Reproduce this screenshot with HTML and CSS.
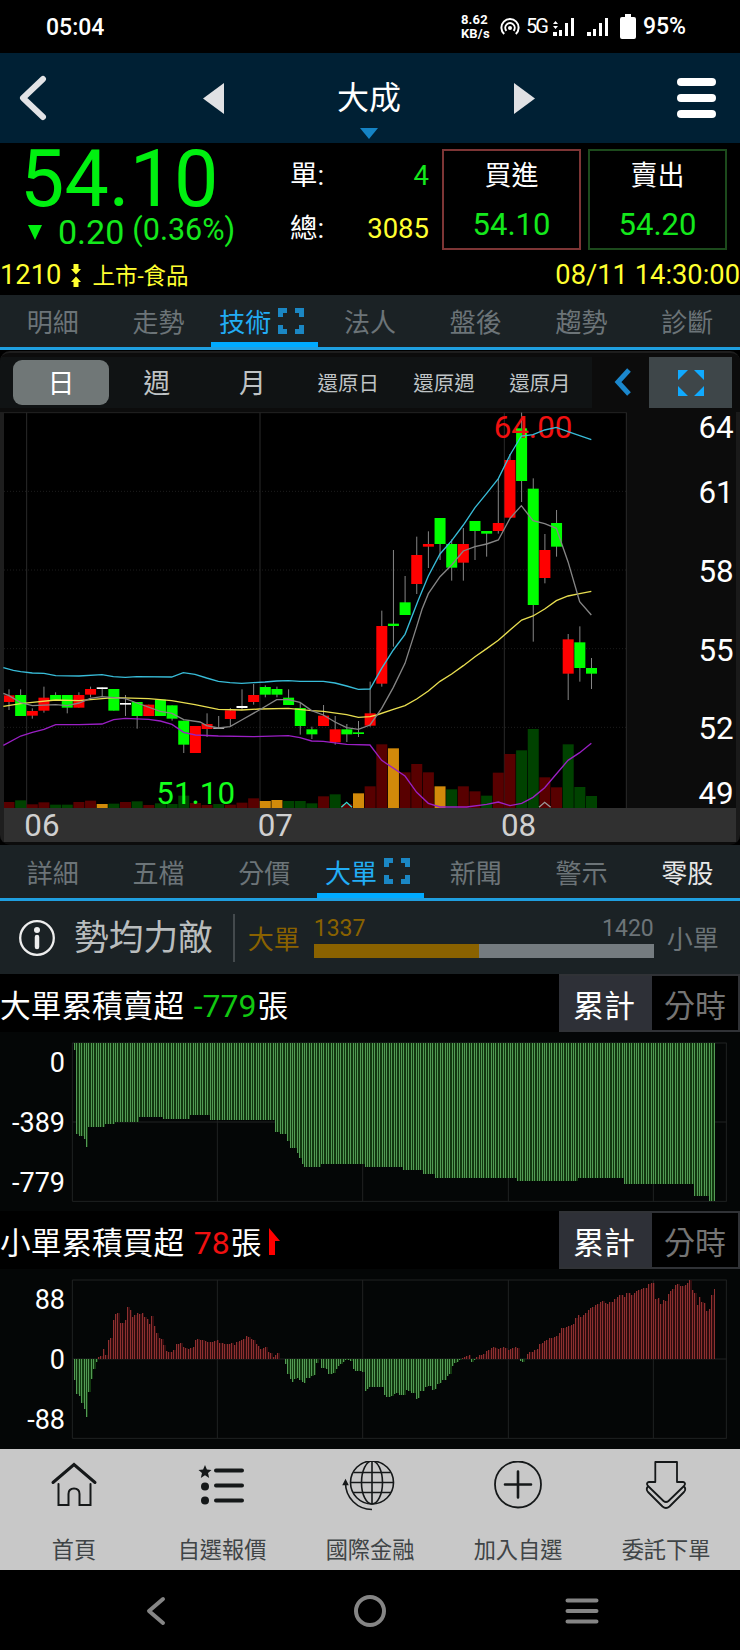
FILE: index.html
```html
<!DOCTYPE html>
<html lang="zh-Hant">
<head>
    <meta charset="UTF-8">
    <meta name="viewport" content="width=device-width, initial-scale=1.0">
    <title>大成 1210</title>
    <link rel="stylesheet" href="styles.css">
</head>
<body>
    <div class="status-bar">
        <span class="clock">05:04</span>
        <div class="status-right">
            <span class="speed">8.62<br>KB/s</span>
            <svg class="hotspot" width="20" height="18" viewBox="0 0 20 18" fill="none" stroke="#fff" stroke-width="2">
                <path d="M4.2 16A8.6 8.6 0 1 1 15.8 16M6.4 12.8A4.7 4.7 0 1 1 13.6 12.8"/>
                <circle cx="10" cy="10" r="2" fill="#fff" stroke="none"/>
            </svg>
            <span class="net">5G</span>
            <svg class="signal" width="22" height="20" viewBox="0 0 22 20" fill="#fff">
                <path d="M0 7L2.5 4L5 7ZM0 9L2.5 12L5 9ZM0 15h4v4H0ZM6 13h3v6H6ZM12 6h3v13h-3ZM18 1h3v18h-3Z"/>
            </svg>
            <svg class="signal2" width="22" height="20" viewBox="0 0 22 20" fill="#fff">
                <path d="M0 15h4v4H0ZM6 12h3v7H6ZM12 6h3v13h-3ZM18 1h3v18h-3Z"/>
            </svg>
            <svg class="battery" width="16" height="25" viewBox="0 0 16 25" fill="#fff">
                <path d="M5 0h6v3h3q2 0 2 2v18q0 2-2 2H2q-2 0-2-2V5q0-2 2-2h3Z"/>
            </svg>
            <span class="percent">95%</span>
        </div>
    </div>

    <header class="header">
        <svg class="back" width="30" height="46" viewBox="0 0 30 46" fill="none" stroke="#e2e3e6" stroke-width="6" stroke-linecap="round" stroke-linejoin="round">
            <path d="M25 4L5 23L25 42"/>
        </svg>
        <div class="stock-switch">
            <svg width="21" height="31" viewBox="0 0 21 31" fill="#e0e1e4"><path d="M21 0V31L0 15.500Z"/></svg>
            <div class="stock-name">大成
                <svg class="drop" width="18" height="11" viewBox="0 0 18 11" fill="#1583c4"><path d="M0 0H18L9 11Z"/></svg>
            </div>
            <svg width="21" height="31" viewBox="0 0 21 31" fill="#e0e1e4"><path d="M0 0V31L21 15.500Z"/></svg>
        </div>
        <div class="menu"><i></i><i></i><i></i></div>
    </header>

    <section class="quote">
        <div class="price-box">
            <div class="price">54.10</div>
            <div class="change">
                <svg width="14" height="15" viewBox="0 0 14 15" fill="#00f010"><path d="M0 0H14L7 15Z"/></svg>
                <span class="diff">0.20</span>
                <span class="rate">(0.36%)</span>
            </div>
        </div>
        <div class="volume-box">
            <div><span>單:</span><span class="green">4</span></div>
            <div><span>總:</span><span class="yellow">3085</span></div>
        </div>
        <div class="order buy"><span>買進</span><b>54.10</b></div>
        <div class="order sell"><span>賣出</span><b>54.20</b></div>
    </section>

    <div class="info-row">
        <span>1210</span>
        <svg width="10" height="23" viewBox="0 0 10 23" fill="#ffff30">
            <path d="M2.500 0h5v5H10L5 10.500L0 5h2.500ZM2.500 23h5v-5H10L5 12.500L0 18h2.500Z"/>
        </svg>
        <span class="market">上市-食品</span>
        <span class="time">08/11 14:30:00</span>
    </div>

    <nav class="tabs">
        <span>明細</span>
        <span>走勢</span>
        <span class="active">技術
            <svg width="26" height="26" viewBox="0 0 26 26" fill="none" stroke="#1b87c4" stroke-width="5"><path d="M2.500 9V2.500H9M17 2.500H23.500V9M23.500 17V23.500H17M9 23.500H2.500V17"/></svg>
        </span>
        <span>法人</span>
        <span>盤後</span>
        <span>趨勢</span>
        <span>診斷</span>
    </nav>

    <section class="k-card">
        <div class="toolbar">
            <div class="periods">
                <span class="selected">日</span>
                <span>週</span>
                <span>月</span>
                <span class="small">還原日</span>
                <span class="small">還原週</span>
                <span class="small">還原月</span>
            </div>
            <svg class="fold" width="17" height="28" viewBox="0 0 17 28" fill="none" stroke="#1b87cc" stroke-width="5"><path d="M15 2L4 14L15 26"/></svg>
            <div class="expand">
                <svg width="26" height="26" viewBox="0 0 26 26" fill="#10aaff"><path d="M0 0H10L0 10ZM26 0V10L16 0ZM26 26H16L26 16ZM0 26V16L10 26Z"/></svg>
            </div>
        </div>
        <svg id="k-chart" width="740" height="430" viewBox="0 -564 2220 1290"></svg>
    </section>

    <nav class="tabs tabs-lower">
        <span>詳細</span>
        <span>五檔</span>
        <span>分價</span>
        <span class="active">大單
            <svg width="26" height="26" viewBox="0 0 26 26" fill="none" stroke="#1b87c4" stroke-width="5"><path d="M2.500 9V2.500H9M17 2.500H23.500V9M23.500 17V23.500H17M9 23.500H2.500V17"/></svg>
        </span>
        <span>新聞</span>
        <span>警示</span>
        <span class="light">零股</span>
    </nav>

    <section class="power">
        <svg width="36" height="36" viewBox="0 0 36 36" fill="none" stroke="#eee">
            <circle cx="18" cy="18" r="16.800" stroke-width="2.300"/>
            <circle cx="18" cy="10" r="3" fill="#eee" stroke="none"/>
            <path d="M18 17V27" stroke-width="4.500" stroke-linecap="round"/>
        </svg>
        <span class="power-text">勢均力敵</span>
        <span class="big">大單</span>
        <div class="ratio">
            <div class="ratio-nums"><span>1337</span><span>1420</span></div>
            <div class="ratio-bar"><i style="width: 48.5%"></i></div>
        </div>
        <span class="little">小單</span>
    </section>

    <section class="flow">
        <div class="flow-head">
            <h2>大單累積賣超 <em class="down">-779</em>張</h2>
            <div class="toggle"><span class="on">累計</span><span>分時</span></div>
        </div>
        <svg id="big-chart" width="740" height="179" viewBox="0 0 2220 537"></svg>
    </section>

    <section class="flow">
        <div class="flow-head">
            <h2>小單累積買超 <em class="red">78</em>張</h2>
            <svg class="up" width="12" height="27" viewBox="0 0 12 27" fill="#f00"><path d="M1 0L12 13H7V27H1Z"/></svg>
            <div class="toggle"><span class="on">累計</span><span>分時</span></div>
        </div>
        <svg id="small-chart" width="740" height="180" viewBox="0 0 2220 540"></svg>
    </section>

    <nav class="bottom-nav">
        <a>
            <svg width="50" height="50" viewBox="0 0 50 50" fill="none" stroke="#151819" stroke-width="2" stroke-linecap="round">
                <path d="M4 21.500L25 3.500L46 21.500" stroke-width="3"/>
                <path d="M9.500 23V44H19.500V33Q19.500 27.500 25 27.500T30.500 33V44H41.500V23"/>
            </svg>
            <span>首頁</span>
        </a>
        <a>
            <svg width="50" height="50" viewBox="0 0 50 50" fill="#151819">
                <path d="M8 4L9.900 8.600L14.500 9L11 12L12.200 17L8 14.200L3.800 17L5 12L1.500 9L6.100 8.600Z"/>
                <circle cx="8" cy="25.500" r="4"/>
                <circle cx="8" cy="39.500" r="4"/>
                <path d="M19 9.500H45M19 24.500H45M19 39.500H45" stroke="#151819" stroke-width="4" stroke-linecap="round"/>
            </svg>
            <span>自選報價</span>
        </a>
        <a>
            <svg width="56" height="50" viewBox="0 0 56 50" fill="none" stroke="#151819" stroke-width="1.600">
                <circle cx="30" cy="21.500" r="21.500"/>
                <ellipse cx="30" cy="21.500" rx="10.500" ry="21.500"/>
                <path d="M30 0V43M8.500 21.500H51.500M11.500 11.500H48.500M11.500 31.500H48.500"/>
                <path d="M3.500 22A26.500 26.500 0 0 0 30 48.500"/>
                <path d="M3.500 19.500L1.500 23.500H5.500Z" fill="#151819"/>
            </svg>
            <span>國際金融</span>
        </a>
        <a>
            <svg width="50" height="50" viewBox="0 0 50 50" fill="none" stroke="#151819" stroke-width="1.800" stroke-linecap="round">
                <circle cx="25" cy="23.500" r="23"/>
                <path d="M12 23.500H38M25 10.500V36.500" stroke-width="2.600"/>
            </svg>
            <span>加入自選</span>
        </a>
        <a>
            <svg width="50" height="50" viewBox="0 0 50 50" fill="none" stroke="#151819" stroke-width="1.800" stroke-linejoin="round">
                <path d="M14.300 1H36V21H42Q45.500 21.800 43 25L27.500 40Q25 42 22.500 40L7 25Q4.500 21.800 8 21H14.300Z"/>
                <path d="M7 25.500Q4.500 28 7 31L21.500 45.500Q25 48.500 28.500 45.500L43 31Q45.500 28 43 25.500"/>
            </svg>
            <span>委託下單</span>
        </a>
    </nav>

    <div class="system-nav">
        <svg class="sys-back" width="20" height="30" viewBox="0 0 20 30" fill="none" stroke="#858585" stroke-width="4" stroke-linecap="round" stroke-linejoin="round"><path d="M17 3L3 15L17 27"/></svg>
        <svg width="34" height="34" viewBox="0 0 34 34" fill="none" stroke="#858585" stroke-width="4"><circle cx="17" cy="17" r="14"/></svg>
        <svg width="34" height="26" viewBox="0 0 34 26" stroke="#858585" stroke-width="4" stroke-linecap="round"><path d="M2.500 2.500H31.500M2.500 13H31.500M2.500 23.500H31.500"/></svg>
    </div>

    <script src="charts.js"></script>
</body>
</html>
```

FILE: styles.css
```css
body {
    margin: 0;
    width: 740px;
    background-color: #000;
    color: #fff;
    font-family: Roboto, "Noto Sans CJK TC", sans-serif;
}

svg {
    display: block;
    flex: none;
}

.green {
    color: #14e81c;
}

.down {
    color: #11c811;
}

.yellow {
    color: #ffff30;
}

.red {
    color: #f01010;
}

/* status bar */
.status-bar {
    display: flex;
    justify-content: space-between;
    height: 53px;
    line-height: 55px;
    padding: 0 54px 0 46px;
    font-size: 23px;
    font-weight: 500;
}

.status-right {
    display: flex;
    align-items: center;
}

.speed {
    font-size: 13px;
    line-height: 13.5px;
    letter-spacing: 0.2px;
    width: 39px;
    font-weight: 700;
}

.net {
    font-size: 20px;
    font-weight: 400;
    width: 27px;
    letter-spacing: -2px;
    margin-left: 6px;
}

.signal2 {
    margin-left: 12px;
}

.battery {
    margin: 0 7px 0 11px;
}

/* header */
.header {
    display: flex;
    align-items: center;
    justify-content: space-between;
    height: 90px;
    padding: 0 24px 0 18px;
    background-color: #002034;
}

.stock-switch {
    display: flex;
    align-items: center;
    justify-content: space-between;
    width: 332px;
    margin-left: 13px;
}

.stock-name {
    position: relative;
    font-size: 32px;
    line-height: 90px;
}

.drop {
    position: absolute;
    left: 23px;
    bottom: 4px;
}

.menu {
    display: grid;
    gap: 8px;
}

.menu i {
    width: 39px;
    height: 8px;
    border-radius: 4px;
    background-color: #fff;
}

/* quote */
.quote {
    display: grid;
    grid-template-columns: 275px 139px 139px 139px;
    column-gap: 7px;
    padding: 6px 0 0 14px;
    height: 101px;
}

.price {
    padding-left: 6px;
    color: #00f010;
    font-size: 79px;
    line-height: 60px;
}

.change {
    display: flex;
    align-items: center;
    height: 46px;
    padding-left: 14px;
    color: #14e81c;
    line-height: 36px;
}

.diff {
    margin-left: 16px;
    font-size: 34px;
}

.rate {
    margin: -4px 0 0 8px;
    font-size: 30.5px;
}

.volume-box {
    margin-left: -6px;
}

.volume-box div {
    display: flex;
    justify-content: space-between;
    margin-right: 6px;
    font-size: 27.5px;
    line-height: 53px;
}

.order {
    display: flex;
    flex-direction: column;
    align-items: center;
    box-sizing: border-box;
    height: 101px;
    border: 2px solid #7d3535;
    font-size: 27px;
    line-height: 50px;
}

.order.sell {
    border-color: #1c4a1c;
}

.order b {
    color: #14e81c;
    font-size: 31px;
    line-height: 47px;
    font-weight: 400;
}

.info-row {
    display: flex;
    align-items: center;
    height: 40px;
    padding-top: 5px;
    line-height: 40px;
    color: #ffff30;
    font-size: 27.3px;
}

.info-row svg {
    margin: 0 11px 0 10px;
}

.market {
    font-size: 22.5px;
    padding-top: 2px;
}

.time {
    margin-left: auto;
}

/* tabs */
.tabs {
    display: grid;
    grid-template-columns: repeat(7, 1fr);
    box-sizing: border-box;
    height: 55px;
    border-bottom: 3px solid #1f9fe0;
    background-color: #1b2225;
    color: #6c7478;
    font-size: 26px;
    line-height: 56px;
    text-align: center;
}

.tabs .active {
    display: flex;
    justify-content: center;
    gap: 7px;
    height: 47px;
    padding-right: 6px;
    margin-right: -1px;
    border-bottom: 5px solid #00aaff;
    color: #22adf5;
}

.tabs .active svg {
    margin-top: 13px;
}

.tabs .light {
    color: #e8e8e8;
}

.tabs-lower {
    height: 56px;
    line-height: 58px;
}

.tabs-lower .active {
    height: 48px;
}

/* k line card */
.k-card {
    margin-top: 1px;
    height: 494px;
    box-sizing: border-box;
    border-top: 2px solid #1e1e1e;
    border-radius: 10px;
    background-color: #0c0c0c;
    overflow: hidden;
}

.toolbar {
    display: flex;
    align-items: center;
    height: 59px;
}

.periods {
    display: grid;
    grid-template-columns: repeat(6, 95.8px);
    width: 579px;
    height: 51px;
    padding-left: 13px;
    background-color: #101314;
    align-items: center;
    text-align: center;
    font-size: 27px;
    color: #bfc3c5;
}

.periods span {
    height: 45px;
    line-height: 48px;
}

.periods .selected {
    border-radius: 9px;
    background-color: #707777;
    color: #fff;
}

.periods .small {
    font-size: 20.5px;
}

.fold {
    margin: -2px 0 0 22px;
}

.expand {
    display: flex;
    align-items: center;
    justify-content: center;
    width: 83px;
    height: 51px;
    margin-left: 18px;
    background-color: #3e4649;
}

#k-chart text {
    font-size: 94px;
}

/* power */
.power {
    display: flex;
    align-items: center;
    height: 73px;
    padding-left: 19px;
    background-color: #1b2225;
    font-size: 26px;
}

.power-text {
    margin-left: 19px;
    padding-right: 20px;
    border-right: 2px solid #444a4d;
    color: #b9bdbe;
    font-size: 34.7px;
    line-height: 48px;
}

.big {
    width: 66px;
    margin-left: 13px;
    color: #8a6200;
}

.ratio {
    width: 340px;
}

.ratio-nums {
    display: flex;
    justify-content: space-between;
    color: #6c7478;
    font-size: 23px;
    line-height: 26px;
    margin-top: -2px;
    padding-bottom: 2px;
}

.ratio-nums span:first-child {
    color: #8a6200;
}

.ratio-bar {
    height: 14px;
    background-color: #757c80;
}

.ratio-bar i {
    display: block;
    height: 14px;
    background-color: #8a6200;
}

.little {
    margin-left: 13px;
    color: #6c7478;
}

/* big / small order flow */
.flow {
    background-color: #040606;
}

.flow-head {
    display: flex;
    height: 58px;
    background-color: #000;
}

.flow-head h2 {
    margin: 0;
    font-size: 30.7px;
    font-weight: 400;
    line-height: 65px;
    white-space: nowrap;
}

.flow-head em {
    margin-left: 2px;
    margin-right: 1px;
    font-size: 32px;
    font-style: normal;
}

.up {
    margin: 17px 0 0 7px;
}

.toggle {
    display: grid;
    grid-template-columns: 93px 86px;
    grid-template-rows: 54px;
    margin-left: auto;
    height: 54px;
    border: 2px solid #303236;
    border-left: none;
    background-color: #000;
    color: #747474;
    font-size: 31px;
    line-height: 61px;
    text-align: center;
}

.toggle span {
    overflow: hidden;
}

.toggle .on {
    padding-right: 3px;
    background-color: #2e3037;
    color: #fff;
}

.flow text {
    font-size: 81px;
}

/* bottom nav */
.bottom-nav {
    display: grid;
    grid-template-columns: repeat(5, 148px);
    height: 121px;
    background-color: #c8c8c8;
}

.bottom-nav a {
    display: flex;
    flex-direction: column;
    align-items: center;
    padding-top: 12px;
    color: #3f4446;
    font-size: 22.2px;
    line-height: 78px;
}

.system-nav {
    display: grid;
    grid-template-columns: 212px 212px 212px;
    justify-content: center;
    justify-items: center;
    align-items: center;
    height: 80px;
    padding-top: 2px;
    box-sizing: border-box;
}

.sys-back {
    margin-right: 4px;
}
```

FILE: charts.js
```js
const COLORS = { r: '#ff0000', g: '#00ff00', w: '#ffffff' };
const VOL_COLORS = { r: '#580000', g: '#004200', o: '#d28a0a' };

// color, high, body top, body bottom, low, volume color, volume top
const candles = [
    ['r', 268, 286, 306, 330, 'r', 606], ['g', 268, 285, 348, 348, 'g', 601],
    ['r', 325, 333, 347, 356, 'r', 613], ['r', 260, 293, 332, 338, 'r', 607],
    ['g', 277, 285, 303, 303, 'g', 614], ['g', 285, 285, 323, 340, 'g', 614],
    ['r', 277, 285, 323, 323, 'r', 606], ['r', 260, 267, 284, 292, 'r', 602],
    ['w', 262, 262, 267, 290, 'o', 612], ['g', 267, 267, 332, 332, 'g', 611],
    ['w', 285, 309, 314, 348, 'r', 606], ['g', 306, 306, 348, 386, 'g', 604],
    ['r', 314, 314, 348, 348, 'r', 615], ['g', 299, 299, 348, 348, 'g', 610],
    ['g', 316, 316, 356, 362, 'g', 612], ['g', 362, 362, 434, 459, 'g', 587],
    ['r', 378, 378, 459, 459, 'r', 609], ['r', 340, 372, 387, 411, 'r', 615],
    ['w', 348, 383, 386, 386, 'g', 612], ['r', 324, 331, 357, 380, 'r', 614],
    ['w', 268, 318, 324, 330, 'r', 608], ['r', 252, 285, 306, 314, 'r', 595],
    ['g', 256, 261, 284, 292, 'o', 603], ['g', 260, 267, 284, 292, 'o', 600],
    ['g', 268, 293, 315, 315, 'g', 603], ['g', 308, 324, 378, 404, 'g', 603],
    ['g', 380, 388, 403, 417, 'g', 610], ['r', 315, 347, 378, 378, 'r', 589],
    ['r', 348, 388, 427, 434, 'g', 583], ['g', 372, 388, 403, 426, 'r', 612],
    ['g', 363, 397, 402, 411, 'o', 580], ['r', 245, 340, 377, 380, 'r', 559],
    ['r', 32, 78, 251, 260, 'r', 433], ['g', -150, 71, 78, 140, 'o', 445],
    ['g', -72, 7, 45, 45, 'r', 517], ['r', -190, -135, -48, -18, 'r', 492],
    ['r', -206, -168, -160, -96, 'r', 517], ['g', -246, -246, -168, -120, 'o', 559],
    ['g', -182, -168, -97, -58, 'g', 568], ['r', -216, -168, -112, -58, 'r', 559],
    ['g', -237, -237, -207, -120, 'r', 574], ['g', -207, -207, -199, -130, 'g', 587],
    ['r', -364, -231, -207, -199, 'r', 518], ['r', -438, -420, -247, -247, 'r', 462],
    ['g', -562, -515, -357, -294, 'g', 451], ['g', -365, -334, 15, 125, 'g', 387],
    ['r', -198, -150, -66, -50, 'r', 532], ['g', -270, -231, -160, -130, 'r', 562],
    ['r', 102, 118, 221, 300, 'g', 433], ['g', 79, 127, 204, 245, 'g', 561],
    ['g', 174, 204, 221, 267, 'g', 588]
];

const upper = '10,203 40,211 62,215 97,219 132,220 167,227 237,228 306,224 340,230 376,232 410,230 515,231 550,218 585,223 620,234 655,244 690,248 725,250 760,248 795,246 830,243 865,242 900,244 970,244 1005,249 1040,258 1075,268 1110,267 1145,205 1180,150 1215,103 1255,0 1285,-72 1320,-138 1355,-178 1390,-225 1425,-277 1460,-320 1495,-364 1530,-435 1564,-492 1599,-496 1634,-510 1669,-518 1704,-505 1739,-493 1774,-481';
const ma5 = '10,280 27,287 62,308 97,317 167,314 202,317 237,309 271,295 306,290 376,296 411,309 481,334 516,340 551,359 600,366 620,377 655,384 690,380 725,360 778,330 830,299 865,299 900,307 935,332 970,345 1005,366 1040,383 1075,388 1110,375 1145,325 1180,262 1215,190 1250,80 1266,28 1285,-19 1320,-70 1355,-105 1390,-147 1425,-160 1460,-168 1495,-180 1530,-245 1564,-283 1599,-238 1634,-229 1669,-215 1704,-115 1739,5 1774,45';
const ma20 = '10,319 62,311 97,307 167,300 237,302 341,293 446,296 515,302 585,314 655,328 725,330 778,327 865,325 935,332 970,334 1040,344 1075,352 1110,350 1130,345 1180,328 1215,317 1250,297 1285,273 1320,244 1355,222 1390,197 1425,170 1460,146 1495,121 1530,90 1565,60 1599,48 1634,27 1669,2 1704,-12 1739,-19 1774,-26';
const lower = '10,436 62,408 97,397 132,388 167,374 237,374 306,372 341,359 376,355 446,358 481,363 516,373 551,397 586,405 655,408 760,410 865,407 900,413 935,423 970,424 1040,433 1110,435 1145,481 1215,528 1250,577 1285,610 1320,621 1400,621 1460,613 1495,606 1530,617 1565,610 1599,592 1634,563 1669,522 1704,481 1739,458 1774,430';

const rect = (x, y, w, h, fill) => `<rect x="${x}" y="${y}" width="${w}" height="${h}" fill="${fill}"/>`;
const line = (x1, y1, x2, y2, color, extra = '') =>
    `<line x1="${x1}" y1="${y1}" x2="${x2}" y2="${y2}" stroke="${color}" stroke-width="3" ${extra}/>`;
const text = (x, y, value, fill, anchor = 'start') =>
    `<text x="${x}" y="${y}" fill="${fill}" text-anchor="${anchor}">${value}</text>`;
const poly = (points, color) =>
    `<polyline points="${points}" fill="none" stroke="${color}" stroke-width="4"/>`;

function drawKChart() {
    let out = rect(0, -564, 12, 1290, '#1e1e1e') + rect(12, -564, 1866, 1188, '#000');

    // grid
    out += line(12, -562, 1880, -562, '#242424');
    [-326, -90, 146, 382].forEach(y => {
        out += line(12, y, 1878, y, '#1d1d1d', 'stroke-dasharray="3 6"');
    });
    [80, 780, 1513, 1879].forEach(x => {
        out += line(x, -562, x, 624, '#2a2a2a');
    });

    candles.forEach((c, i) => {
        const x = 27 + 34.95 * i;
        const left = Math.max(x - 16.5, 12);
        out += rect(left, c[6], x + 16.5 - left, 624 - c[6], VOL_COLORS[c[5]]);
    });
    candles.forEach((c, i) => {
        const x = 27 + 34.95 * i;
        const left = Math.max(x - 16.5, 12);
        out += line(x, c[1], x, c[4], '#858585');
        out += rect(left, c[2], x + 16.5 - left, c[3] - c[2], COLORS[c[0]]);
    });

    out += text(1481, -486, '64.00', '#f01010');
    out += text(469, 612, '51.10', '#14ff1c');

    out += poly(lower, '#9a1fc4') + poly(ma20, '#e8de50') + poly(ma5, '#858585') + poly(upper, '#38bcd8');
    out += poly('1024,622 1040,607 1056,622', '#38d8d0') + poly('1617,622 1634,607 1652,622', '#999');

    // axes
    out += rect(12, 624, 2196, 102, '#303030');
    out += text(73, 709, '06', '#d0d0d0') + text(773, 709, '07', '#d0d0d0') + text(1503, 709, '08', '#d0d0d0');
    [[64, -486], [61, -291], [58, -55], [55, 182], [52, 418], [49, 612]].forEach(([v, y]) => {
        out += text(2201, y, v, '#fff', 'end');
    });
    out += rect(2208, -564, 12, 1290, '#1a1a1a');
    document.getElementById('k-chart').innerHTML = out;
}

function flowFrame(labels) {
    let out = '';
    [33, 270, 508].forEach(y => out += line(217, y, 2180, y, '#202222'));
    [217, 652, 1088, 1525, 1960, 2179].forEach(x => out += line(x, 33, x, 508, '#202222'));
    labels.forEach((v, i) => out += text(195, 121 + 179 * i, v, '#fff', 'end'));
    return out;
}

// [last x, bar end]
const bigSteps = [
    [226, 54], [233, 306], [247, 311], [254, 320], [262, 344], [312, 286], [343, 277],
    [414, 271], [488, 254], [567, 260], [628, 249], [823, 263], [837, 300], [858, 306],
    [865, 326], [888, 347], [895, 362], [902, 379], [909, 397], [960, 404], [1090, 395],
    [1207, 404], [1267, 414], [1303, 426], [1550, 438], [1730, 446], [1870, 438],
    [2083, 455], [2125, 491], [2150, 507]
];

const smallBars = [
    540, 582, 587, 610, 626, 650, 577, 538, 507, 486, 472, 468, 448, 464, 420, 415, 360, 342, 340, 370,
    370, 361, 321, 330, 351, 345, 339, 342, 340, 351, 356, 372, 348, 378, 400, 413, 417, 435, 454, 457,
    457, 451, 432, 432, 430, 441, 445, 447, 445, 440, 420, 416, 420, 421, 423, 426, 426, 426, 423, 420,
    428, 430, 432, 432, 432, 430, 436, 427, 424, 421, 418, 408, 412, 416, 419, 433, 438, 447, 445, 442,
    457, 459, 470, 464, 458, 477, 477, 493, 521, 536, 547, 537, 535, 540, 546, 550, 534, 534, 528, 525,
    489, 477, 503, 503, 508, 521, 521, 520, 506, 498, 492, 486, 480, 481, 483, 507, 512, 513, 513, 515,
    572, 568, 560, 560, 560, 560, 560, 560, 585, 590, 590, 588, 582, 579, 585, 585, 585, 571, 574, 579,
    579, 598, 593, 574, 574, 561, 558, 558, 569, 566, 551, 548, 540, 539, 528, 521, 498, 488, 485, 480,
    474, 470, 468, 464, 485, 481, 472, 465, 464, 461, 453, 450, 445, 441, 443, 448, 445, 442, 445, 450,
    447, 443, 440, 445, 484, 486, 478, 462, 457, 455, 451, 447, 433, 429, 422, 420, 415, 413, 411, 409,
    400, 385, 385, 380, 378, 376, 373, 354, 345, 351, 346, 340, 330, 325, 321, 316, 311, 306, 302, 309,
    311, 307, 307, 297, 292, 286, 284, 290, 279, 279, 286, 279, 273, 270, 267, 265, 264, 253, 250, 249,
    297, 294, 311, 300, 302, 282, 273, 266, 254, 252, 258, 258, 256, 248, 240, 271, 279, 316, 292, 306,
    308, 332, 327, 286, 267
];

function drawFlow(id, labels, zero, ends) {
    let out = flowFrame(labels) + '<g shape-rendering="crispEdges">';
    ends.forEach((end, i) => {
        const x = 223 + 7.27 * i;
        const down = end > zero;
        const top = Math.min(zero, end);
        const h = Math.abs(end - zero);
        out += rect(x - 1.5, top, i < ends.length - 1 ? 7.3 : 3, h, down ? '#12380f' : '#2e0c0e');
        out += rect(x - 1.5, top, 3, h, down ? '#529a54' : '#8e3030');
    });
    document.getElementById(id).innerHTML = out + '</g>';
}

const bigBars = smallBars.map((_, i) => bigSteps.find(s => 223 + 7.27 * i <= s[0])[1]);

drawKChart();
drawFlow('big-chart', ['0', '-389', '-779'], 32, bigBars);
drawFlow('small-chart', ['88', '0', '-88'], 270, smallBars.map(y => y - 207));
```
